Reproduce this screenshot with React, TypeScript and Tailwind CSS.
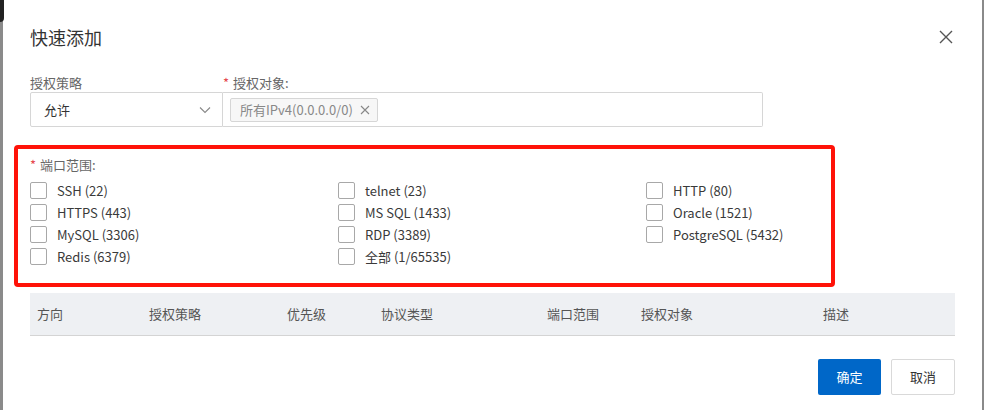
import React from "react";

const font = { fontFamily: '"Noto Sans CJK SC", "Noto Sans", sans-serif' };

function Box({ label }: { label: string }) {
  return (
    <div className="flex h-[22px] items-center">
      <span className="box-border h-[17px] w-[17px] rounded-[2px] border border-[#a8a8a8] bg-white" />
      <span className="ml-[10px] text-[13px] leading-none text-[#3a3a3a]">{label}</span>
    </div>
  );
}

export default function App() {
  const col1 = ["SSH (22)", "HTTPS (443)", "MySQL (3306)", "Redis (6379)"];
  const col2 = ["telnet (23)", "MS SQL (1433)", "RDP (3389)", "全部 (1/65535)"];
  const col3 = ["HTTP (80)", "Oracle (1521)", "PostgreSQL (5432)"];
  const heads: [string, number][] = [
    ["方向", 112],
    ["授权策略", 138],
    ["优先级", 94],
    ["协议类型", 166],
    ["端口范围", 94],
    ["授权对象", 182],
    ["描述", 100],
  ];
  return (
    <div className="flex h-[410px] w-[984px] overflow-hidden bg-white" style={font}>
      <div className="flex w-[3px] flex-col bg-[#8a8a8a]">
        <div className="h-[22px] w-[4px] rounded-br-[4px] bg-[#222]" />
      </div>
      <div className="flex flex-1 flex-col pl-[27px] pr-[27px]">
        <div className="flex h-[74px] items-center justify-between">
          <span className="text-[18px] text-[#333]">快速添加</span>
          <svg width="14" height="14" viewBox="0 0 14 14" className="mr-[2px]">
            <path d="M1 1 L13 13 M13 1 L1 13" stroke="#555" strokeWidth="1.4" />
          </svg>
        </div>
        <div className="flex h-[18px] items-center text-[13px] text-[#666]">
          <span className="w-[193px]">授权策略</span>
          <span className="text-[#e5484d]">*</span>
          <span className="ml-[4px]">授权对象:</span>
        </div>
        <div className="mt-[0px] flex h-[35px]">
          <div className="box-border flex w-[193px] items-center justify-between rounded-l-[2px] border border-[#d6d6d6] pl-[13px] pr-[11px]">
            <span className="text-[13px] text-[#333]">允许</span>
            <svg width="12" height="8" viewBox="0 0 12 8">
              <path d="M1 1.5 L6 6.5 L11 1.5" fill="none" stroke="#888" strokeWidth="1.1" />
            </svg>
          </div>
          <div className="box-border flex w-[540px] items-center rounded-r-[2px] border border-l-0 border-[#d6d6d6] pl-[7px]">
            <div className="box-border flex h-[24px] items-center rounded-[2px] border border-[#d6d6d6] bg-[#f7f7f7] pl-[9px] pr-[7px]">
              <span className="text-[13px] text-[#888]">所有IPv4(0.0.0.0/0)</span>
              <svg width="10" height="10" viewBox="0 0 10 10" className="ml-[7px]">
                <path d="M1 1 L9 9 M9 1 L1 9" stroke="#888" strokeWidth="1.1" />
              </svg>
            </div>
          </div>
        </div>
        <div className="ml-[-16px] mt-[18px] box-border h-[142px] w-[821px] rounded-[4px] border-4 border-[#ff1208] pl-[12px] pt-[7px]">
          <div className="flex h-[18px] items-center text-[13px] text-[#666]">
            <span className="text-[#e5484d]">*</span>
            <span className="ml-[4px]">端口范围:</span>
          </div>
          <div className="mt-[5px] grid grid-cols-[308px_308px_200px]">
            <div className="flex flex-col">{col1.map((l) => <Box key={l} label={l} />)}</div>
            <div className="flex flex-col">{col2.map((l) => <Box key={l} label={l} />)}</div>
            <div className="flex flex-col">{col3.map((l) => <Box key={l} label={l} />)}</div>
          </div>
        </div>
        <div className="mt-[6px] box-border flex h-[43px] w-[925px] items-center border-b border-[#d4d4d4] bg-[#eef0f3] pl-[7px] text-[13px] text-[#555]">
          {heads.map(([h, w]) => (
            <span key={h} style={{ width: w }} className="shrink-0">
              {h}
            </span>
          ))}
        </div>
        <div className="mt-[23px] flex justify-end gap-[10px]">
          <button className="h-[36px] w-[63px] rounded-[2px] bg-[#0067c8] text-[13px] text-white">确定</button>
          <button className="box-border h-[36px] w-[64px] rounded-[2px] border border-[#d9d9d9] bg-white text-[13px] text-[#333]">取消</button>
        </div>
      </div>
      <div className="w-[3px] bg-[#8a8a8a]" />
    </div>
  );
}
